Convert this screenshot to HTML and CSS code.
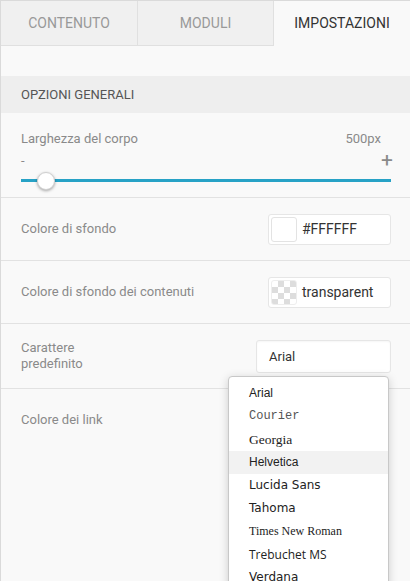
FILE: index.html
```html
<!DOCTYPE html>
<html lang="it">
<head>
  <meta charset="UTF-8">
  <title>Impostazioni</title>
  <link rel="stylesheet" href="styles.css">
</head>
<body>
<div class="panel">
  <div class="tabs">
    <div class="tab">Contenuto</div>
    <div class="tab">Moduli</div>
    <div class="tab active">Impostazioni</div>
  </div>

  <div class="section-title">Opzioni generali</div>

  <div class="row row-slider">
    <div class="slider-head">
      <span class="label">Larghezza del corpo</span>
      <span class="value">500px</span>
    </div>
    <div class="slider-signs">
      <span class="minus">-</span>
      <span class="plus">+</span>
    </div>
    <div class="track">
      <span class="thumb"></span>
    </div>
  </div>

  <div class="row">
    <span class="label">Colore di sfondo</span>
    <div class="color-input">
      <span class="swatch"></span>
      <span class="color-text">#FFFFFF</span>
    </div>
  </div>

  <div class="row">
    <span class="label">Colore di sfondo dei contenuti</span>
    <div class="color-input">
      <span class="swatch checker"></span>
      <span class="color-text">transparent</span>
    </div>
  </div>

  <div class="row row-font">
    <span class="label">Carattere<br>predefinito</span>
    <div class="font-select">Arial</div>
    <ul class="dropdown">
      <li class="f-arial">Arial</li>
      <li class="f-courier">Courier</li>
      <li class="f-georgia">Georgia</li>
      <li class="f-helvetica hover">Helvetica</li>
      <li class="f-lucida">Lucida Sans</li>
      <li class="f-tahoma">Tahoma</li>
      <li class="f-times">Times New Roman</li>
      <li class="f-trebuchet">Trebuchet MS</li>
      <li class="f-verdana">Verdana</li>
    </ul>
  </div>

  <div class="row row-last">
    <span class="label">Colore dei link</span>
  </div>
</div>
</body>
</html>
```

FILE: styles.css
```css
html, body {
  margin: 0;
  height: 100%;
  overflow: hidden;
  background: #f9f9f9;
}

body {
  font-family: Roboto, "Liberation Sans", sans-serif;
}

.panel {
  min-height: 100%;
  box-sizing: border-box;
  border-top: 1px solid #dadada;
  border-left: 1px solid #dadada;
  background: #f9f9f9;
}

/* tabs */
.tabs {
  display: grid;
  grid-template-columns: 137px 136px 1fr;
  height: 45px;
}

.tab {
  display: flex;
  align-items: center;
  justify-content: center;
  text-transform: uppercase;
  font-size: 14px;
  color: #999;
  background: #f0f0f0;
  border-right: 1px solid #e0e0e0;
  border-bottom: 1px solid #e0e0e0;
  padding-bottom: 1px;
}

.tab.active {
  color: #333;
  background: #f9f9f9;
  border: none;
}

.section-title {
  margin-top: 30px;
  height: 37px;
  line-height: 37px;
  padding-left: 20px;
  background: #eeeeee;
  text-transform: uppercase;
  font-size: 13px;
  color: #555;
}

/* rows */
.row {
  position: relative;
  display: flex;
  align-items: center;
  justify-content: space-between;
  height: 62px;
  padding: 0 19px 0 20px;
  border-bottom: 1px solid #e2e2e2;
}

.label {
  font-size: 13px;
  color: #8a8a8a;
  line-height: 16px;
}

.row-slider {
  display: block;
  height: auto;
  padding-top: 18px;
  padding-bottom: 15px;
}

.slider-head {
  display: flex;
  justify-content: space-between;
  padding-right: 10px;
}

.value {
  font-size: 13px;
  color: #8a8a8a;
}

.slider-signs {
  display: flex;
  justify-content: space-between;
  color: #8a8a8a;
  font-size: 13px;
  height: 17px;
  margin-top: 6px;
}

.plus {
  font-size: 21px;
  line-height: 15px;
  margin-right: -2px;
}

.track {
  position: relative;
  height: 3px;
  margin-top: 9px;
  background: #27a2c6;
}

.thumb {
  position: absolute;
  left: 16px;
  top: -7px;
  width: 16px;
  height: 16px;
  border-radius: 50%;
  background: #fff;
  border: 1px solid #d0d0d0;
  box-shadow: 0 1px 3px rgba(0, 0, 0, 0.35);
}

/* colour inputs */
.color-input {
  display: flex;
  align-items: center;
  gap: 5px;
  width: 117px;
  height: 29px;
  padding: 0 2px;
  background: #fff;
  border: 1px solid #e6e6e6;
  border-radius: 3px;
}

.swatch {
  width: 24px;
  height: 23px;
  border: 1px solid #e3e3e3;
  border-radius: 3px;
  background: #fff;
}

.swatch.checker {
  border-color: #eee;
  background-color: #fff;
  background-image:
    linear-gradient(45deg, #ddd 25%, transparent 25%, transparent 75%, #ddd 75%),
    linear-gradient(45deg, #ddd 25%, transparent 25%, transparent 75%, #ddd 75%);
  background-size: 12px 12px;
  background-position: 0 0, 6px 6px;
}

.color-text {
  font-size: 14px;
  color: #333;
}

/* font select */
.row-font {
  height: 64px;
}

.font-select {
  width: 121px;
  height: 31px;
  line-height: 31px;
  padding-left: 12px;
  margin-top: 1px;
  background: #fff;
  border: 1px solid #e6e6e6;
  border-radius: 3px;
  font-size: 13px;
  color: #333;
  box-shadow: inset 0 1px 2px rgba(0, 0, 0, 0.04);
}

.dropdown {
  position: absolute;
  left: 227px;
  top: 52px;
  width: 159px;
  height: 260px;
  margin: 0;
  padding: 5px 0 0;
  list-style: none;
  background: #fff;
  border: 1px solid #c8c8c8;
  border-radius: 4px 4px 0 0;
  box-shadow: 0 2px 10px rgba(0, 0, 0, 0.18);
  z-index: 2;
}

.dropdown li {
  height: 23px;
  line-height: 23px;
  padding-left: 20px;
  font-size: 12px;
  color: #222;
}

.dropdown li.hover {
  background: #f2f2f2;
}

.f-arial, .f-helvetica { font-family: "Liberation Sans", Arial, sans-serif; }
.f-courier { font-family: "Liberation Mono", "Courier New", monospace; color: #555 !important; }
.f-georgia { font-family: "Liberation Serif", Georgia, serif; font-size: 13.5px !important; }
.f-lucida { font-family: "DejaVu Sans", sans-serif; }
.f-tahoma { font-family: "DejaVu Sans", sans-serif; }
.f-times { font-family: "Liberation Serif", "Times New Roman", serif; }
.f-trebuchet { font-family: "Open Sans", sans-serif; }
.f-verdana { font-family: "DejaVu Sans", sans-serif; }

.row-last {
  align-items: flex-start;
  height: auto;
  padding-top: 23px;
  border-bottom: none;
}
```
